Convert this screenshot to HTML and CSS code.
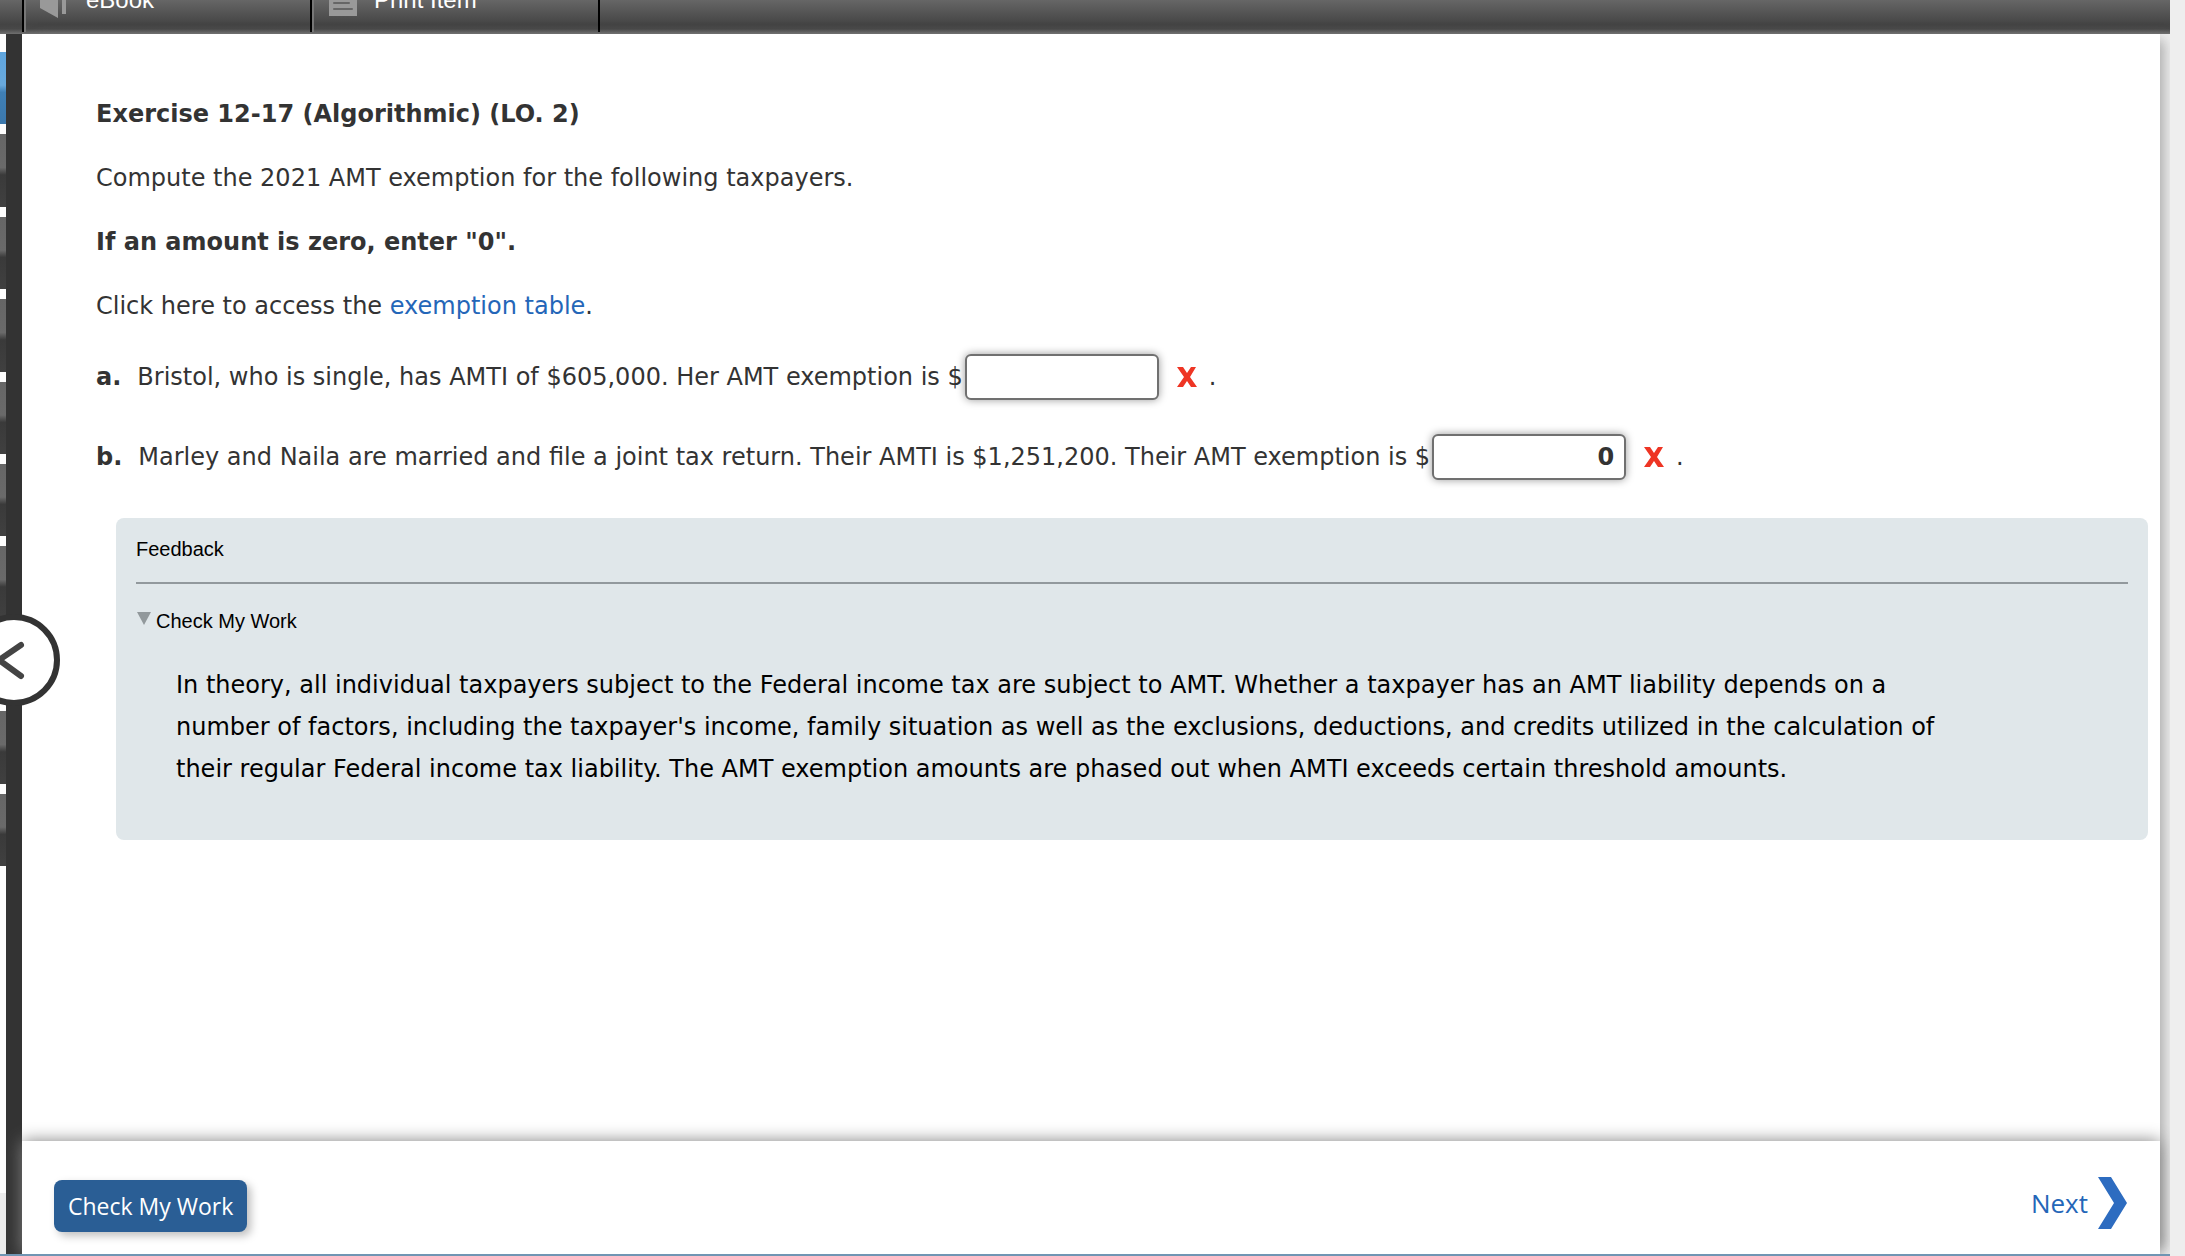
FILE: index.html
```html
<!DOCTYPE html>
<html lang="en">

<head>
  <meta charset="UTF-8">
  <title>Exercise 12-17</title>
  <meta name="viewport" content="width=device-width, initial-scale=1.0">
  <link rel="stylesheet" href="styles.css">
</head>

<body>

  <div class="window">
    <nav class="toolbar">
      <button class="tool" type="button">
        <svg width="30" height="40" viewBox="0 0 30 40">
          <path d="M0 2 L18 8 V38 L0 28 Z M22 5 H26 V34 H22 Z" fill="#999" />
        </svg>
        eBook
      </button>
      <button class="tool" type="button">
        <svg width="30" height="40" viewBox="0 0 30 40">
          <path d="M1 4 H29 V36 H1 Z" fill="#999" />
          <path d="M6 16 H19 M6 23 H21 M6 29 H24" stroke="#666" stroke-width="2" stroke-linecap="round" />
        </svg>
        Print Item
      </button>
    </nav>

    <div class="workspace">
      <aside class="sidebar">
        <ul class="items">
          <li class="item current"></li>
          <li class="item"></li>
          <li class="item"></li>
          <li class="item"></li>
          <li class="item"></li>
          <li class="item"></li>
          <li class="item"></li>
          <li class="item"></li>
          <li class="item"></li>
          <li class="item"></li>
        </ul>
        <div class="sidebar-foot"></div>
      </aside>
      <div class="divider"></div>
      <button class="collapse" type="button" aria-label="Collapse">
        <svg width="80" height="80" viewBox="-26 -40 80 80">
          <path d="M21 -15 L-1 0 L21 16" fill="none" stroke="#444" stroke-width="6" stroke-linecap="round" />
        </svg>
      </button>

      <div class="page">
        <main class="content">
          <h1>Exercise 12-17 (Algorithmic) (LO. 2)</h1>
          <p>Compute the 2021 AMT exemption for the following taxpayers.</p>
          <p><b>If an amount is zero, enter "0".</b></p>
          <p>Click here to access the <a href="#">exemption table</a>.</p>

          <div class="question">
            <b>a.</b>
            <label for="answerA">Bristol, who is single, has AMTI of $605,000. Her AMT exemption is $</label>
            <input class="answer" id="answerA" type="text">
            <svg class="wrong" width="20" height="20" viewBox="0 0 20 20">
              <path d="M0 0 H6 L10 6 L14 0 H19 L13 10 L20 20 H14 L10 14 L6 20 H0 L7 10 Z" fill="#ee3524" />
            </svg>
            <span>.</span>
          </div>
          <div class="question">
            <b>b.</b>
            <label for="answerB">Marley and Naila are married and file a joint tax return. Their AMTI is $1,251,200. Their AMT exemption is $</label>
            <input class="answer" id="answerB" type="text" value="0">
            <svg class="wrong" width="20" height="20" viewBox="0 0 20 20">
              <path d="M0 0 H6 L10 6 L14 0 H19 L13 10 L20 20 H14 L10 14 L6 20 H0 L7 10 Z" fill="#ee3524" />
            </svg>
            <span>.</span>
          </div>

          <section class="feedback">
            <h2>Feedback</h2>
            <details open>
              <summary>
                <svg width="16" height="20" viewBox="0 0 16 20">
                  <path d="M1 1 H15 L8 14 Z" fill="#92999c" />
                </svg>
                Check My Work
              </summary>
              <p>In theory, all individual taxpayers subject to the Federal income tax are subject to AMT. Whether a taxpayer has an AMT liability depends on a number of factors, including the taxpayer's income, family situation as well as the exclusions, deductions, and credits utilized in the calculation of their regular Federal income tax liability. The AMT exemption amounts are phased out when AMTI exceeds certain threshold amounts.</p>
            </details>
          </section>
        </main>

        <footer class="actions">
          <button class="check" type="button">Check My Work</button>
          <a class="next" href="#">
            Next
            <svg width="30" height="52" viewBox="0 0 30 52">
              <path d="M0 0 H13 L29 26 L13 52 H0 L16 26 Z" fill="#2d6cc0" />
            </svg>
          </a>
        </footer>
      </div>
    </div>
  </div>

</body>

</html>
```
FILE: styles.css
```css
* {
  box-sizing: border-box;
}

body {
  margin: 0;
  background: #eee;
  color: #333;
  font-family: Verdana, "DejaVu Sans", sans-serif;
  font-size: 24px;
  line-height: 32px;
}

.window {
  display: flex;
  flex-direction: column;
  height: 100vh;
  margin-right: 15px;
  overflow: hidden;
  border-bottom: 2px solid #7095b3;
}

/* toolbar, upper half scrolled out of view */
.toolbar {
  display: flex;
  align-items: flex-end;
  flex: none;
  height: 34px;
  padding: 0 0 2px 22px;
  overflow: hidden;
  background: linear-gradient(#666, #444 72%, #484848 85%, #707070);
}

.tool {
  display: flex;
  align-items: center;
  gap: 16px;
  flex: none;
  width: 288px;
  height: 64px;
  padding: 0 0 0 16px;
  border: 0;
  border-left: 2px solid #000;
  box-shadow: inset 2px 0 #777;
  background: none;
  color: #fff;
  font: 24px/28px Arial, "Liberation Sans", sans-serif;
}

.tool:last-child {
  width: 290px;
  border-right: 2px solid #000;
}

.workspace {
  position: relative;
  display: flex;
  flex: 1;
  min-height: 0;
}

/* left strip */
.sidebar {
  display: flex;
  flex-direction: column;
  justify-content: space-between;
  width: 6px;
  padding-top: 18px;
  background: #fdfdfd;
}

.items {
  display: flex;
  flex-direction: column;
  gap: 10px;
  height: 814px;
  margin: 0;
  padding: 0;
  list-style: none;
}

.item {
  flex: 1;
  background: linear-gradient(#666, #6a6a6a 46%, #3a3a3a 56%, #404040);
}

.item.current {
  background: linear-gradient(#5fa5de, #68a9dd 46%, #3f7fb5 56%, #3c78ac);
}

.sidebar-foot {
  height: 61px;
  background: #ececec;
}

.divider {
  width: 16px;
  background: #333;
}

.collapse {
  position: absolute;
  left: -32px;
  top: 580px;
  z-index: 2;
  width: 92px;
  height: 92px;
  padding: 0;
  border: 6px solid #333;
  border-radius: 50%;
  background: #fff;
}

.collapse svg {
  display: block;
}

.page {
  display: flex;
  flex-direction: column;
  flex: 1;
  min-width: 0;
  margin-right: 10px;
  background: #fff;
  box-shadow: 10px 0 12px -6px rgba(128, 128, 128, 0.6);
}

.content {
  flex: 1;
  padding: 64px 12px 0 74px;
}

h1 {
  margin: 0 0 32px;
  font-size: 24px;
}

.content p {
  margin: 0 0 32px;
}

a {
  color: #2466b8;
  text-decoration: none;
}

.question {
  display: flex;
  align-items: center;
  height: 46px;
  margin-bottom: 34px;
}

.question b {
  margin-right: 16px;
}

.answer {
  width: 194px;
  height: 46px;
  margin: 0 18px 0 2px;
  padding: 0 10px;
  border: 2px solid #707070;
  border-radius: 6px;
  box-shadow: 0 0 8px rgba(0, 0, 0, 0.4);
  color: #333;
  font: bold 24px Verdana, "DejaVu Sans", sans-serif;
  text-align: right;
}

.wrong {
  margin-right: 12px;
}

.feedback {
  margin: 38px 0 0 20px;
  padding: 20px 20px 18px;
  border-radius: 8px;
  background: #e0e7ea;
  color: #000;
}

.feedback h2 {
  margin: 0 0 26px;
  padding-bottom: 22px;
  border-bottom: 2px solid #92999d;
  font: 20px/22px Arial, "Liberation Sans", sans-serif;
}

.feedback summary {
  display: flex;
  align-items: center;
  gap: 4px;
  font: 20px/22px Arial, "Liberation Sans", sans-serif;
}

.feedback p {
  max-width: 1780px;
  margin: 32px 40px;
  line-height: 42px;
}

/* bottom bar */
.actions {
  display: flex;
  justify-content: space-between;
  align-items: center;
  height: 113px;
  padding: 16px 32px 0;
  background: #fff;
  box-shadow: 0 0 16px #808080;
}

.check {
  height: 52px;
  padding: 0 14px;
  border: 0;
  border-radius: 8px;
  background: #2a5e95;
  box-shadow: 4px 4px 8px rgba(0, 0, 0, 0.25);
  color: #fff;
  font: 23px/32px "Open Sans", sans-serif;
}

.next {
  display: flex;
  align-items: center;
  gap: 10px;
  margin-bottom: 6px;
  font: 26px/36px "Open Sans", sans-serif;
}
```
